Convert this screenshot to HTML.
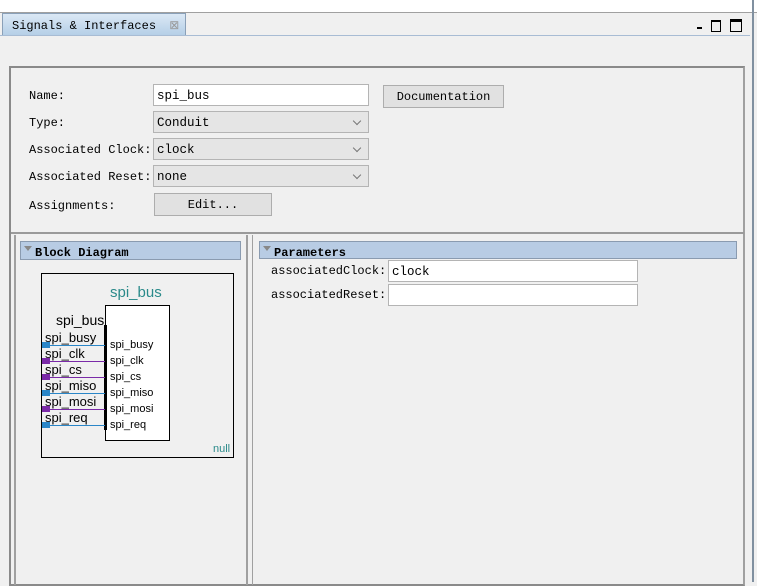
<!DOCTYPE html>
<html><head><style>
body{margin:0;width:757px;height:582px;background:#f0f0f0;position:relative;overflow:hidden;font-family:"Liberation Mono",monospace;font-size:12px;color:#000}
.a{position:absolute;white-space:nowrap}
.lbl{position:absolute;left:29px;font-size:12px;white-space:nowrap}
.in{position:absolute;background:#fff;border:1px solid #b4b4b4;box-sizing:border-box;padding:4px 3px 0;font-size:12.5px}
.sel{position:absolute;background:#e5e5e5;border:1px solid #b4b4b4;box-sizing:border-box;padding:4px 3px 0;font-size:12.5px}
.sel:after{content:"";position:absolute;right:8px;top:6px;width:5px;height:5px;border-right:1px solid #777;border-bottom:1px solid #777;transform:rotate(45deg)}
.btn{position:absolute;background:#e1e1e1;border:1px solid #adadad;box-sizing:border-box;text-align:center;font-size:12px;padding-top:4px}
.hd{position:absolute;background:#b8cce4;border:1px solid #8a9bb0;box-sizing:border-box;font-weight:bold;font-size:12px;padding:4px 0 0 14px}
.hd:before{content:"";position:absolute;left:3px;top:4px;border:4px solid transparent;border-top:5px solid #888}
.sn{position:absolute;font-family:"Liberation Sans",sans-serif;font-size:11px;white-space:nowrap}
</style></head><body>
<div class="a" style="left:0;top:0;width:757px;height:12px;background:#fff;border-bottom:1px solid #a0a0a0"></div>
<div class="a" style="left:752px;top:0;width:2px;height:582px;background:#8090a0"></div>
<div class="a" style="left:2px;top:13px;width:184px;height:22px;background:linear-gradient(#dbe8f5,#b5cfe7);border:1px solid #8aa0b8;border-bottom:none;box-sizing:border-box;padding:4px 0 0 9px;font-size:12px">Signals &amp; Interfaces <span style="color:#999;margin-left:6px">⊠</span></div>
<div class="a" style="left:0;top:35px;width:750px;height:1px;background:#a8bcd4"></div>
<div class="a" style="left:697px;top:27px;width:5px;height:2px;background:#000"></div>
<div class="a" style="left:711px;top:20px;width:8px;height:9px;border:1px solid #000;border-top-width:2px"></div>
<div class="a" style="left:730px;top:19px;width:10px;height:9px;border:1px solid #000;border-top-width:3px"></div>
<div class="a" style="left:9px;top:66px;width:736px;height:520px;border:2px solid #8a8a8a;border-right-color:#a0a0a0;box-sizing:border-box"></div>
<div class="lbl" style="top:89px">Name:</div>
<div class="in" style="left:153px;top:84px;width:216px;height:22px">spi_bus</div>
<div class="btn" style="left:383px;top:85px;width:121px;height:23px">Documentation</div>
<div class="lbl" style="top:116px">Type:</div>
<div class="sel" style="left:153px;top:111px;width:216px;height:22px">Conduit</div>
<div class="lbl" style="top:143px">Associated Clock:</div>
<div class="sel" style="left:153px;top:138px;width:216px;height:22px">clock</div>
<div class="lbl" style="top:170px">Associated Reset:</div>
<div class="sel" style="left:153px;top:165px;width:216px;height:22px">none</div>
<div class="lbl" style="top:199px">Assignments:</div>
<div class="btn" style="left:154px;top:193px;width:118px;height:23px">Edit...</div>
<div class="a" style="left:11px;top:232px;width:733px;height:2px;background:#9a9a9a"></div>
<div class="a" style="left:14px;top:235px;width:2px;height:350px;background:#a0a0a0"></div>
<div class="a" style="left:246px;top:235px;width:2px;height:350px;background:#a0a0a0"></div>
<div class="a" style="left:252px;top:235px;width:1px;height:350px;background:#a0a0a0"></div>
<div class="hd" style="left:20px;top:241px;width:221px;height:19px">Block Diagram</div>
<div class="hd" style="left:259px;top:241px;width:478px;height:18px">Parameters</div>
<div class="a" style="left:271px;top:264px;font-size:12px">associatedClock:</div>
<div class="in" style="left:388px;top:260px;width:250px;height:22px">clock</div>
<div class="a" style="left:271px;top:288px;font-size:12px">associatedReset:</div>
<div class="in" style="left:388px;top:284px;width:250px;height:22px"></div>
<div class="a" style="left:41px;top:273px;width:193px;height:185px;border:1px solid #000;box-sizing:border-box;background:#f0f0f0"></div>
<div class="sn" style="left:110px;top:284px;font-size:15px;color:#2a8a8a">spi_bus</div>
<div class="a" style="left:105px;top:305px;width:65px;height:136px;background:#fff;border:1px solid #000;box-sizing:border-box"></div>
<div class="a" style="left:104px;top:325px;width:3px;height:105px;background:#000"></div>
<div class="sn" style="left:56px;top:312px;font-size:14px">spi_bus</div>
<div class="sn" style="left:213px;top:443px;color:#2a8a8a">null</div>
<div id="sig"></div>
<script>
var s=[["spi_busy","#2a86c8"],["spi_clk","#7a2aa8"],["spi_cs","#7a2aa8"],["spi_miso","#2a86c8"],["spi_mosi","#7a2aa8"],["spi_req","#2a86c8"]],h="";
for(var i=0;i<6;i++){var y=345+i*16;
h+='<div class="sn" style="left:45px;top:'+(y-15)+'px;font-size:13px">'+s[i][0]+'</div>';
h+='<div class="a" style="left:42px;top:'+y+'px;width:63px;height:1px;background:'+s[i][1]+'"></div>';
h+='<div class="a" style="left:42px;top:'+(y-3)+'px;width:8px;height:6px;background:'+s[i][1]+'"></div>';
h+='<div class="sn" style="left:110px;top:'+(y-6)+'px">'+s[i][0]+'</div>';}
document.getElementById("sig").innerHTML=h;
</script>
</body></html>
